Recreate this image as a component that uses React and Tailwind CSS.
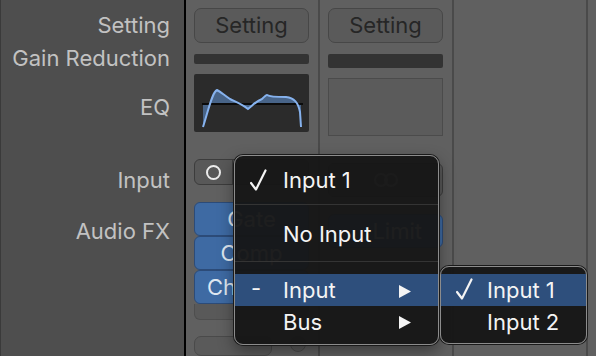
import React from 'react';

const font = { fontFamily: 'Inter, "Noto Sans", sans-serif' };

function Check({ className }) {
  return (
    <svg width="17" height="22" viewBox="0 0 17 22" className={className}>
      <polyline points="1,14 6,20.5 15.5,1.5" fill="none" stroke="#f4f4f4" strokeWidth="2.2" strokeLinecap="round" strokeLinejoin="round" />
    </svg>
  );
}

function Arrow() {
  return (
    <svg width="12" height="13" viewBox="0 0 12 13">
      <polygon points="0,0 12,6.5 0,13" fill="#f4f4f4" />
    </svg>
  );
}

function EqCurve() {
  const curve =
    'M9,53 C14,38 18,18 23,16 C27,18 30,21 36,25 C42,28 48,30 54,35 C58,32 62,27 68,25 C70,23 72,21 73,21 C76,23 84,23 92,23 C100,24 104,28 106,38 L107,53';
  return (
    <svg width="115" height="58" viewBox="0 0 115 58">
      <path d={curve + ' L107,30 L9,30 Z'} fill="#4d6f99" fillOpacity="0.85" />
      <line x1="8" y1="30" x2="109" y2="30" stroke="#0b0b0b" strokeWidth="2" />
      <path d={curve} fill="none" stroke="#86b2ee" strokeWidth="2" />
    </svg>
  );
}

function Label({ children, className }) {
  return (
    <div className={'flex items-center justify-end pr-[14px] text-[22px] text-[#c2c2c2] whitespace-nowrap ' + className}>
      {children}
    </div>
  );
}

function SettingButton() {
  return (
    <div className="h-[35px] w-[115px] rounded-[7px] border border-[#474747] bg-[#5a5a5a] flex items-center justify-center text-[22px] text-[#262626]">
      Setting
    </div>
  );
}

function FxSlot({ name, className }) {
  return (
    <div className={'h-[34px] w-[115px] rounded-[6px] border border-[#2c4b78] bg-[#3e6aa3] flex items-center text-[22px] text-[#dfe7f1] whitespace-nowrap overflow-hidden ' + className}>
      {name}
    </div>
  );
}

function Strip({ children }) {
  return (
    <div className="w-[134px] shrink-0 h-full border-r-2 border-[#4a4a4a] pl-[8px] pt-[8px] flex flex-col">
      {children}
    </div>
  );
}

export default function App() {
  return (
    <div className="relative w-[596px] h-[356px] overflow-hidden flex bg-[#606060]" style={font}>
      {/* label column */}
      <div className="w-[186px] shrink-0 h-full bg-[#4e4e4e] border-l border-l-[#3a3a3a] border-r-2 border-r-black pt-[8px] flex flex-col">
        <Label className="h-[35px]">Setting</Label>
        <Label className="h-[30px]">Gain Reduction</Label>
        <Label className="h-[58px] mt-[5px]">EQ</Label>
        <Label className="h-[34px] mt-[27px]">Input</Label>
        <Label className="h-[34px] mt-[17px]">Audio FX</Label>
      </div>

      {/* channel 1 */}
      <Strip>
        <SettingButton />
        <div className="mt-[11px] h-[14px] w-[115px] rounded-[2px] bg-[#333333]" />
        <div className="mt-[10px] h-[58px] w-[115px] rounded-[2px] bg-[#2b2b2b]">
          <EqCurve />
        </div>
        <div className="mt-[27px] h-[34px] w-[115px] rounded-[6px] border border-[#3c3c3c] bg-[#585858] flex">
          <div className="w-[38px] h-full border-r border-[#3c3c3c] flex items-center justify-center">
            <div className="w-[15px] h-[15px] rounded-full border-2 border-[#ececec]" />
          </div>
        </div>
        <div className="mt-[17px] flex flex-col">
          <FxSlot name="Gate" className="justify-center" />
          <FxSlot name="Comp" className="justify-center" />
          <FxSlot name="ChromaVerb" className="pl-[12px]" />
          <div className="h-[16px] w-[115px] rounded-b-[6px] border border-t-0 border-[#4e4e4e] bg-[#595959]" />
        </div>
        <div className="mt-[16px] flex items-start gap-[18px]">
          <div className="h-[20px] w-[78px] rounded-[7px] border border-[#4a4a4a] bg-[#5a5a5a]" />
          <div className="h-[16px] w-[16px] rounded-full border border-[#4a4a4a] bg-[#5a5a5a]" />
        </div>
      </Strip>

      {/* channel 2 */}
      <Strip>
        <SettingButton />
        <div className="mt-[11px] h-[14px] w-[115px] rounded-[2px] bg-[#333333]" />
        <div className="mt-[10px] h-[58px] w-[115px] border border-[#4b4b4b] bg-[#5b5b5b]" />
        <div className="mt-[27px] h-[34px] w-[115px] rounded-[6px] border border-[#3c3c3c] bg-[#585858] flex items-center justify-center">
          <svg width="26" height="14" viewBox="0 0 26 14">
            <circle cx="8" cy="7" r="6" fill="none" stroke="#9a9a9a" strokeWidth="2" />
            <circle cx="18" cy="7" r="6" fill="none" stroke="#9a9a9a" strokeWidth="2" />
          </svg>
        </div>
        <div className="mt-[17px]">
          <FxSlot name="Limit" className="justify-end pr-[20px]" />
        </div>
      </Strip>

      {/* channel 3 */}
      <Strip />
      <div className="flex-1 h-full bg-[#606060]" />

      {/* popup menu */}
      <div className="absolute left-[234px] top-[155px] w-[205px] rounded-[9px] border border-[#8c8c8c] bg-[#161616]/[0.96] pt-[4px] pb-[6px] text-[22px] text-[#f4f4f4] shadow-[0_0_0_1px_#1a1a1a,0_6px_16px_rgba(0,0,0,0.4)]">
        <div className="h-[40px] flex items-center">
          <div className="w-[48px] flex justify-end pr-[16px]"><Check /></div>
          <span>Input 1</span>
        </div>
        <div className="mt-[4px] h-px bg-[#343434]" />
        <div className="mt-[7px] h-[44px] flex items-center pl-[48px]">No Input</div>
        <div className="mt-[5px] h-px bg-[#343434]" />
        <div className="mt-[12px] h-[32px] flex items-center bg-[#2e4f7c]">
          <div className="w-[48px] pl-[16px] pb-[3px]">-</div>
          <span className="flex-1">Input</span>
          <div className="pr-[27px] pt-[3px] flex"><Arrow /></div>
        </div>
        <div className="h-[32px] flex items-center">
          <div className="w-[48px]" />
          <span className="flex-1">Bus</span>
          <div className="pr-[27px] pt-[1px] flex"><Arrow /></div>
        </div>
      </div>

      {/* submenu */}
      <div className="absolute left-[440px] top-[266px] w-[147px] rounded-[9px] border border-[#8c8c8c] bg-[#161616]/[0.96] pt-[7px] pb-[5px] text-[22px] text-[#f4f4f4] shadow-[0_0_0_1px_#1a1a1a]">
        <div className="h-[32px] flex items-center bg-[#2e4f7c]">
          <div className="w-[46px] flex justify-end pr-[14px] pb-[2px]"><Check /></div>
          <span>Input 1</span>
        </div>
        <div className="h-[32px] flex items-center pl-[46px]">Input 2</div>
      </div>
    </div>
  );
}
